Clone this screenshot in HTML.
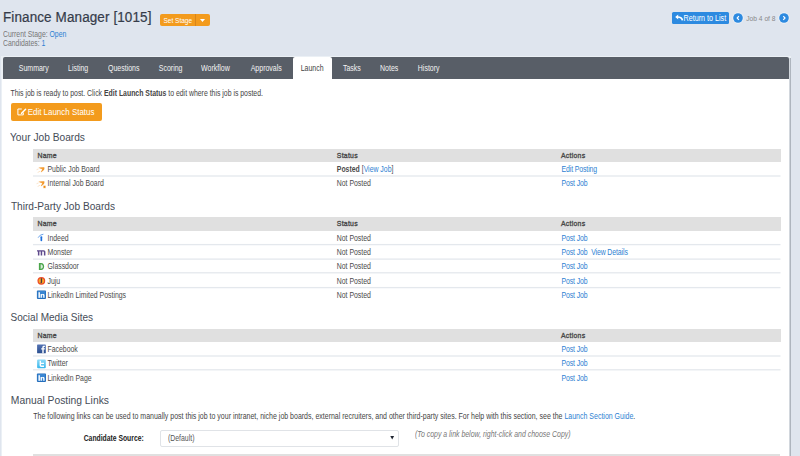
<!DOCTYPE html>
<html><head><meta charset="utf-8"><style>
html,body{margin:0;padding:0}
body{width:800px;height:456px;overflow:hidden;position:relative;background:#dfe5ee;font-family:"Liberation Sans",sans-serif}
.t{position:absolute;white-space:nowrap;line-height:1;transform-origin:0 0.8465em}
.r{position:absolute}
b{font-weight:bold}
</style></head><body>
<svg width="0" height="0" style="position:absolute"><defs><linearGradient id="garr" x1="0" y1="0" x2="1" y2="0"><stop offset="0" stop-color="#f8c489"/><stop offset="0.5" stop-color="#f5a443"/><stop offset="1" stop-color="#f2921f"/></linearGradient></defs></svg>
<div class="t" style="left:3px;top:11px;font-size:13.5px;color:#353c4a;transform:scaleY(1.07);transform-origin:0 11px;letter-spacing:0.1px;-webkit-text-stroke:0.2px #353c4a">Finance Manager [1015]</div>
<div class="r" style="left:160px;top:14px;width:49.75px;height:12px;background:#f39b1d;border-radius:2px"></div>
<div class="r" style="left:195px;top:14px;width:1px;height:12px;background:#d9861a"></div>
<div class="t" style="left:163.5px;top:18px;font-size:6.5px;color:#fff;transform:scaleY(1.2);transform-origin:0 5px;">Set Stage</div>
<svg class="r" style="left:198px;top:17px" width="9" height="6"><path d="M2 2 H7 L4.5 5 Z" fill="#fff"/></svg>
<div class="t" style="left:3px;top:32px;font-size:6.87px;color:#777;transform:scaleY(1.2);transform-origin:0 5px;">Current Stage: <span style="color:#2d7fd2">Open</span></div>
<div class="t" style="left:3px;top:41px;font-size:6.87px;color:#777;transform:scaleY(1.2);transform-origin:0 5px;">Candidates: <span style="color:#2d7fd2">1</span></div>
<div class="r" style="left:672px;top:12px;width:56.60000000000002px;height:11.600000000000001px;background:#2d8ae0;border-radius:1.5px"></div>
<svg class="r" style="left:675px;top:13.5px" width="9" height="8" viewBox="0 0 9 8"><path d="M0.2 3 L3.2 0.6 V5.4 Z" fill="#fff"/><path d="M2.6 3 C5.6 3 7.1 4 7.4 6.4" stroke="#fff" stroke-width="1.7" fill="none"/></svg>
<div class="t" style="left:683.6px;top:16px;font-size:7.16px;color:#fff;transform:scaleY(1.2);transform-origin:0 5px;">Return to List</div>
<svg class="r" style="left:731.7px;top:12px" width="12" height="12" viewBox="0 0 12 12"><circle cx="6" cy="6" r="5.7" fill="#eef2f7"/><circle cx="6" cy="6" r="4.8" fill="#2d8ae0"/><path d="M6.9 4.2 L5.2 6 L6.9 7.8" stroke="#fff" stroke-width="1.2" fill="none"/></svg>
<div class="t" style="left:746.3px;top:16px;font-size:6.65px;color:#888;transform:scaleY(1.2);transform-origin:0 5px;">Job 4 of 8</div>
<svg class="r" style="left:778.4px;top:12px" width="12" height="12" viewBox="0 0 12 12"><circle cx="6" cy="6" r="5.7" fill="#eef2f7"/><circle cx="6" cy="6" r="4.8" fill="#2d8ae0"/><path d="M5.3 4.2 L7 6 L5.3 7.8" stroke="#fff" stroke-width="1.2" fill="none"/></svg>
<div class="r" style="left:1px;top:55.5px;width:790px;height:400.5px;background:#ebf0f5"></div>
<div class="r" style="left:2px;top:79px;width:787.3px;height:377px;background:#fff"></div>
<div class="r" style="left:789px;top:58px;width:1px;height:398px;background:#d2d7dd"></div>
<div class="r" style="left:790px;top:58px;width:1px;height:398px;background:#aeb5be"></div>
<div class="r" style="left:2.6px;top:57px;width:786.8px;height:22px;background:#585e67;border-radius:2px 2px 0 0"></div>
<div class="r" style="left:293px;top:56.7px;width:38.69999999999999px;height:23.799999999999997px;background:#fff;border-radius:2px 2px 0 0"></div>
<div class="t" style="left:18.75px;top:65px;font-size:7.0px;color:#f4f4f4;transform:scaleY(1.2);transform-origin:0 6px;">Summary</div>
<div class="t" style="left:68px;top:65px;font-size:7.0px;color:#f4f4f4;transform:scaleY(1.2);transform-origin:0 6px;">Listing</div>
<div class="t" style="left:108px;top:65px;font-size:7.0px;color:#f4f4f4;transform:scaleY(1.2);transform-origin:0 6px;">Questions</div>
<div class="t" style="left:158.75px;top:65px;font-size:7.0px;color:#f4f4f4;transform:scaleY(1.2);transform-origin:0 6px;">Scoring</div>
<div class="t" style="left:201.1px;top:65px;font-size:7.0px;color:#f4f4f4;transform:scaleY(1.2);transform-origin:0 6px;">Workflow</div>
<div class="t" style="left:250.7px;top:65px;font-size:7.0px;color:#f4f4f4;transform:scaleY(1.2);transform-origin:0 6px;">Approvals</div>
<div class="t" style="left:300.7px;top:65px;font-size:7.0px;color:#444;transform:scaleY(1.2);transform-origin:0 6px;">Launch</div>
<div class="t" style="left:342.9px;top:65px;font-size:7.0px;color:#f4f4f4;transform:scaleY(1.2);transform-origin:0 6px;">Tasks</div>
<div class="t" style="left:380px;top:65px;font-size:7.0px;color:#f4f4f4;transform:scaleY(1.2);transform-origin:0 6px;">Notes</div>
<div class="t" style="left:417.8px;top:65px;font-size:7.0px;color:#f4f4f4;transform:scaleY(1.2);transform-origin:0 6px;">History</div>
<div class="t" style="left:10.5px;top:91px;font-size:6.9px;color:#444;transform:scaleY(1.2);transform-origin:0 5px;">This job is ready to post. Click <b>Edit Launch Status</b> to edit where this job is posted.</div>
<div class="r" style="left:10.5px;top:103px;width:91.5px;height:17.5px;background:#f39b1d;border-radius:2px"></div>
<svg class="r" style="left:17px;top:107.5px" width="10" height="8" viewBox="0 0 10 8"><path d="M4.8 1 H0.9 V6.9 H6.3 V4.6" stroke="#fff" stroke-width="1" fill="none"/><path d="M8.6 1.3 L4.6 5.3" stroke="#fff" stroke-width="1.5" stroke-linecap="round"/><path d="M3.9 6.1 L4.2 4.8 L5.2 5.8 Z" fill="#fff"/></svg>
<div class="t" style="left:27.7px;top:109px;font-size:7.96px;color:#fff;transform:scaleY(1.2);transform-origin:0 6px;">Edit Launch Status</div>
<div class="r" style="left:33px;top:149px;width:747.5px;height:12.5px;background:#e0e0e0"></div>
<div class="t" style="left:37.5px;top:153px;font-size:6.9px;color:#474747;transform:scaleY(1.1);transform-origin:0 5px;-webkit-text-stroke:0.3px #474747;letter-spacing:0.25px">Name</div>
<div class="t" style="left:336.8px;top:153px;font-size:6.9px;color:#474747;transform:scaleY(1.1);transform-origin:0 5px;-webkit-text-stroke:0.3px #474747;letter-spacing:0.25px">Status</div>
<div class="t" style="left:561px;top:153px;font-size:6.9px;color:#474747;transform:scaleY(1.1);transform-origin:0 5px;-webkit-text-stroke:0.3px #474747;letter-spacing:0.25px">Actions</div>
<svg class="r" style="left:33px;top:173px" width="748" height="8"><rect x="0" y="2.35" width="747.5" height="1.3" fill="#e4e8ed"/></svg>
<svg class="r" style="left:35px;top:163.80px" width="12" height="12" viewBox="0 0 12 12"><path d="M1.6 5.7 L3.6 4.9" stroke="#f7c48a" stroke-width="0.8" opacity="0.55"/><path d="M2.6 8.6 L5 7.2" stroke="#f7c48a" stroke-width="0.8" opacity="0.55"/><path d="M3.4 3.5 C5.3 3.1 7.5 3 9.3 3.3 L9.4 4.9 C8.8 6.1 7.6 7.3 6.2 8.3 L5.7 7.9 C6.4 7 6.9 6.1 7.2 5.3 C5.8 5 4.6 4.7 3.4 3.5 Z" fill="url(#garr)"/></svg>
<div class="t" style="left:47.5px;top:167px;font-size:6.9px;color:#4a4a4a;transform:scaleY(1.2);transform-origin:0 5px;">Public Job Board</div>
<div class="t" style="left:336.8px;top:167px;font-size:6.9px;color:#4a4a4a;transform:scaleY(1.2);transform-origin:0 5px;"><b>Posted</b> [<span style="color:#2d7fd2">View Job</span>]</div>
<div class="t" style="left:561.5px;top:167px;font-size:6.9px;color:#2d7fd2;transform:scaleY(1.2);transform-origin:0 5px;letter-spacing:-0.1px">Edit Posting</div>
<svg class="r" style="left:35px;top:177.90px" width="12" height="12" viewBox="0 0 12 12"><path d="M1.6 5.7 L3.6 4.9" stroke="#f7c48a" stroke-width="0.8" opacity="0.55"/><path d="M2.6 8.6 L5 7.2" stroke="#f7c48a" stroke-width="0.8" opacity="0.55"/><path d="M3.4 3.5 C5.3 3.1 7.5 3 9.3 3.3 L9.4 4.9 C8.8 6.1 7.6 7.3 6.2 8.3 L5.7 7.9 C6.4 7 6.9 6.1 7.2 5.3 C5.8 5 4.6 4.7 3.4 3.5 Z" fill="url(#garr)"/><rect x="8.2" y="7.6" width="2.6" height="2.5" fill="#ee8a12" stroke="#fff5e6" stroke-width="0.4"/></svg>
<div class="t" style="left:47.5px;top:181px;font-size:6.9px;color:#4a4a4a;transform:scaleY(1.2);transform-origin:0 5px;">Internal Job Board</div>
<div class="t" style="left:336.8px;top:181px;font-size:6.9px;color:#4a4a4a;transform:scaleY(1.2);transform-origin:0 5px;">Not Posted</div>
<div class="t" style="left:561.5px;top:181px;font-size:6.9px;color:#2d7fd2;transform:scaleY(1.2);transform-origin:0 5px;letter-spacing:-0.1px">Post Job</div>
<div class="t" style="left:10px;top:133px;font-size:10.2px;color:#454c57;transform:scaleY(1.07);transform-origin:0 8px;">Your Job Boards</div>
<div class="t" style="left:10.9px;top:202px;font-size:10.15px;color:#454c57;transform:scaleY(1.07);transform-origin:0 8px;">Third-Party Job Boards</div>
<div class="r" style="left:33px;top:217px;width:747.5px;height:13.5px;background:#e0e0e0"></div>
<div class="t" style="left:37.5px;top:221px;font-size:6.9px;color:#474747;transform:scaleY(1.1);transform-origin:0 5px;-webkit-text-stroke:0.3px #474747;letter-spacing:0.25px">Name</div>
<div class="t" style="left:336.8px;top:221px;font-size:6.9px;color:#474747;transform:scaleY(1.1);transform-origin:0 5px;-webkit-text-stroke:0.3px #474747;letter-spacing:0.25px">Status</div>
<div class="t" style="left:561px;top:221px;font-size:6.9px;color:#474747;transform:scaleY(1.1);transform-origin:0 5px;-webkit-text-stroke:0.3px #474747;letter-spacing:0.25px">Actions</div>
<svg class="r" style="left:33px;top:241px" width="748" height="8"><rect x="0" y="2.95" width="747.5" height="1.3" fill="#e4e8ed"/></svg>
<svg class="r" style="left:33px;top:256px" width="748" height="8"><rect x="0" y="2.45" width="747.5" height="1.3" fill="#e4e8ed"/></svg>
<svg class="r" style="left:33px;top:269px" width="748" height="8"><rect x="0" y="3.15" width="747.5" height="1.3" fill="#e4e8ed"/></svg>
<svg class="r" style="left:33px;top:284px" width="748" height="8"><rect x="0" y="2.95" width="747.5" height="1.3" fill="#e4e8ed"/></svg>
<svg class="r" style="left:35px;top:232.45px" width="12" height="12" viewBox="0 0 12 12"><path d="M3.1 5.7 Q4.8 2.4 8.4 2.2" stroke="#3d86e4" stroke-width="0.9" fill="none" opacity="0.85"/><circle cx="6.35" cy="5.3" r="1.05" fill="#1c6fdc"/><rect x="5.5" y="5.6" width="1.7" height="3.6" rx="0.8" fill="#1c6fdc"/></svg>
<div class="t" style="left:47.5px;top:236px;font-size:6.9px;color:#4a4a4a;transform:scaleY(1.2);transform-origin:0 5px;">Indeed</div>
<div class="t" style="left:336.8px;top:236px;font-size:6.9px;color:#4a4a4a;transform:scaleY(1.2);transform-origin:0 5px;">Not Posted</div>
<div class="t" style="left:561.5px;top:236px;font-size:6.9px;color:#2d7fd2;transform:scaleY(1.2);transform-origin:0 5px;letter-spacing:-0.1px">Post Job</div>
<svg class="r" style="left:35px;top:246.60px" width="12" height="12" viewBox="0 0 12 12"><path d="M2 3.3 H8.6 C9.8 3.3 10.4 4 10.4 5 V8.5 H8.9 V5.2 C8.9 4.8 8.7 4.6 8.3 4.6 H7.2 V8.5 H5.7 V4.6 H4.4 V8.5 H2.9 V4.6 H2 Z" fill="#5f4a8c"/></svg>
<div class="t" style="left:47.5px;top:250px;font-size:6.9px;color:#4a4a4a;transform:scaleY(1.2);transform-origin:0 5px;">Monster</div>
<div class="t" style="left:336.8px;top:250px;font-size:6.9px;color:#4a4a4a;transform:scaleY(1.2);transform-origin:0 5px;">Not Posted</div>
<div class="t" style="left:561.5px;top:250px;font-size:6.9px;color:#2d7fd2;transform:scaleY(1.2);transform-origin:0 5px;letter-spacing:-0.1px">Post Job&nbsp; View Details</div>
<svg class="r" style="left:35px;top:260.75px" width="12" height="12" viewBox="0 0 12 12"><path d="M3.9 2.1 H6 C8.2 2.1 9.1 3.9 9.1 5.6 C9.1 7.3 8.2 9.1 6 9.1 H3.9 Z" fill="#4aa54a"/><path d="M5.6 3.2 C7.4 3.5 7.9 4.6 7.9 5.6 C7.9 6.6 7.4 7.7 5.6 8 Z" fill="#d8edd8"/></svg>
<div class="t" style="left:47.5px;top:264px;font-size:6.9px;color:#4a4a4a;transform:scaleY(1.2);transform-origin:0 5px;">Glassdoor</div>
<div class="t" style="left:336.8px;top:264px;font-size:6.9px;color:#4a4a4a;transform:scaleY(1.2);transform-origin:0 5px;">Not Posted</div>
<div class="t" style="left:561.5px;top:264px;font-size:6.9px;color:#2d7fd2;transform:scaleY(1.2);transform-origin:0 5px;letter-spacing:-0.1px">Post Job</div>
<svg class="r" style="left:35px;top:274.90px" width="12" height="12" viewBox="0 0 12 12"><circle cx="6.35" cy="5.85" r="3.9" fill="#ec4a2a"/><circle cx="6.35" cy="5.85" r="2.7" fill="#f8a826"/><path d="M5.8 3.2 H7.1 V7 C7.1 8 6.3 8.4 5.4 8.2 L5.5 7.4 C5.9 7.4 5.8 7.2 5.8 6.8 Z" fill="#4a3340"/></svg>
<div class="t" style="left:47.5px;top:279px;font-size:6.9px;color:#4a4a4a;transform:scaleY(1.2);transform-origin:0 5px;">Juju</div>
<div class="t" style="left:336.8px;top:279px;font-size:6.9px;color:#4a4a4a;transform:scaleY(1.2);transform-origin:0 5px;">Not Posted</div>
<div class="t" style="left:561.5px;top:279px;font-size:6.9px;color:#2d7fd2;transform:scaleY(1.2);transform-origin:0 5px;letter-spacing:-0.1px">Post Job</div>
<svg class="r" style="left:35px;top:289.05px" width="12" height="12" viewBox="0 0 12 12"><rect x="1.9" y="1.6" width="9.1" height="8.3" rx="0.8" fill="#1f66b3"/><rect x="2.5" y="2.1" width="7.9" height="7.2" rx="0.5" fill="#3a86d2"/><rect x="3.5" y="3.2" width="1.4" height="5.6" fill="#fff"/><path d="M5.6 5 H6.9 V5.6 C7.4 4.8 9.5 4.6 9.5 6.3 V8.8 H8.2 V6.6 C8.2 5.8 6.9 5.9 6.9 6.6 V8.8 H5.6 Z" fill="#fff"/></svg>
<div class="t" style="left:47.5px;top:293px;font-size:6.9px;color:#4a4a4a;transform:scaleY(1.2);transform-origin:0 5px;">LinkedIn Limited Postings</div>
<div class="t" style="left:336.8px;top:293px;font-size:6.9px;color:#4a4a4a;transform:scaleY(1.2);transform-origin:0 5px;">Not Posted</div>
<div class="t" style="left:561.5px;top:293px;font-size:6.9px;color:#2d7fd2;transform:scaleY(1.2);transform-origin:0 5px;letter-spacing:-0.1px">Post Job</div>
<div class="t" style="left:10.5px;top:313px;font-size:10.05px;color:#454c57;transform:scaleY(1.07);transform-origin:0 8px;">Social Media Sites</div>
<div class="r" style="left:33px;top:329px;width:747.5px;height:12.5px;background:#e0e0e0"></div>
<div class="t" style="left:37.5px;top:333px;font-size:6.9px;color:#474747;transform:scaleY(1.1);transform-origin:0 5px;-webkit-text-stroke:0.3px #474747;letter-spacing:0.25px">Name</div>
<div class="t" style="left:561px;top:333px;font-size:6.9px;color:#474747;transform:scaleY(1.1);transform-origin:0 5px;-webkit-text-stroke:0.3px #474747;letter-spacing:0.25px">Actions</div>
<svg class="r" style="left:33px;top:353px" width="748" height="8"><rect x="0" y="2.35" width="747.5" height="1.3" fill="#e4e8ed"/></svg>
<svg class="r" style="left:33px;top:366px" width="748" height="8"><rect x="0" y="3.15" width="747.5" height="1.3" fill="#e4e8ed"/></svg>
<svg class="r" style="left:35px;top:343.45px" width="12" height="12" viewBox="0 0 12 12"><defs><linearGradient id="gfb" x1="0" y1="0" x2="0" y2="1"><stop offset="0" stop-color="#5574b5"/><stop offset="1" stop-color="#2a4e8f"/></linearGradient></defs><rect x="2.1" y="1.4" width="8.7" height="8.9" rx="0.6" fill="url(#gfb)"/><path d="M7.3 10.3 V6.6 H6.2 V5.3 H7.3 V4.3 C7.3 3.2 7.9 2.7 8.9 2.7 H9.9 V4 H9.2 C8.8 4 8.7 4.2 8.7 4.5 V5.3 H9.9 L9.7 6.6 H8.7 V10.3 Z" fill="#fff"/></svg>
<div class="t" style="left:47.5px;top:347px;font-size:6.9px;color:#4a4a4a;transform:scaleY(1.2);transform-origin:0 5px;">Facebook</div>
<div class="t" style="left:561.5px;top:347px;font-size:6.9px;color:#2d7fd2;transform:scaleY(1.2);transform-origin:0 5px;letter-spacing:-0.1px">Post Job</div>
<svg class="r" style="left:35px;top:357.70px" width="12" height="12" viewBox="0 0 12 12"><defs><linearGradient id="gtw" x1="0" y1="0" x2="0" y2="1"><stop offset="0" stop-color="#8edaf7"/><stop offset="1" stop-color="#37b6ec"/></linearGradient></defs><rect x="2.1" y="1.4" width="8.7" height="8.9" rx="1" fill="url(#gtw)"/><path d="M4.6 2.8 V7.2 C4.6 8.3 5.2 8.9 6.3 8.9 H9 V7.6 H6.6 C6.1 7.6 6 7.4 6 7 V6 H9 V4.7 H6 V2.8 Z" fill="#fff"/></svg>
<div class="t" style="left:47.5px;top:361px;font-size:6.9px;color:#4a4a4a;transform:scaleY(1.2);transform-origin:0 5px;">Twitter</div>
<div class="t" style="left:561.5px;top:361px;font-size:6.9px;color:#2d7fd2;transform:scaleY(1.2);transform-origin:0 5px;letter-spacing:-0.1px">Post Job</div>
<svg class="r" style="left:35px;top:371.95px" width="12" height="12" viewBox="0 0 12 12"><rect x="1.9" y="1.6" width="9.1" height="8.3" rx="0.8" fill="#1f66b3"/><rect x="2.5" y="2.1" width="7.9" height="7.2" rx="0.5" fill="#3a86d2"/><rect x="3.5" y="3.2" width="1.4" height="5.6" fill="#fff"/><path d="M5.6 5 H6.9 V5.6 C7.4 4.8 9.5 4.6 9.5 6.3 V8.8 H8.2 V6.6 C8.2 5.8 6.9 5.9 6.9 6.6 V8.8 H5.6 Z" fill="#fff"/></svg>
<div class="t" style="left:47.5px;top:376px;font-size:6.9px;color:#4a4a4a;transform:scaleY(1.2);transform-origin:0 5px;">LinkedIn Page</div>
<div class="t" style="left:561.5px;top:376px;font-size:6.9px;color:#2d7fd2;transform:scaleY(1.2);transform-origin:0 5px;letter-spacing:-0.1px">Post Job</div>
<div class="t" style="left:10.8px;top:396px;font-size:10.33px;color:#454c57;transform:scaleY(1.07);transform-origin:0 8px;">Manual Posting Links</div>
<div class="t" style="left:33.3px;top:413px;font-size:7.0px;color:#444;transform:scaleY(1.2);transform-origin:0 6px;">The following links can be used to manually post this job to your intranet, niche job boards, external recruiters, and other third-party sites. For help with this section, see the <span style="color:#2d7fd2">Launch Section Guide</span>.</div>
<div class="t" style="left:83.7px;top:436px;font-size:6.8px;color:#222;transform:scaleY(1.2);transform-origin:0 5px;font-weight:bold">Candidate Source:</div>
<div class="r" style="left:160.2px;top:430px;width:238.8px;height:17px;background:#fff;border:1px solid #e0e3e7;border-radius:2px;box-sizing:border-box"></div>
<div class="t" style="left:168px;top:436px;font-size:6.9px;color:#555;transform:scaleY(1.2);transform-origin:0 5px;">(Default)</div>
<svg class="r" style="left:388px;top:434px" width="9" height="8"><path d="M2.3 1.9 H6.1 L4.2 5.4 Z" fill="#1e2430"/></svg>
<div class="t" style="left:415px;top:432px;font-size:6.95px;color:#777;transform:scaleY(1.2);transform-origin:0 5px;font-style:italic">(To copy a link below, right-click and choose Copy)</div>
<div class="r" style="left:33.3px;top:454.3px;width:747.2px;height:1.6999999999999886px;background:#e0e0e0"></div>
</body></html>
